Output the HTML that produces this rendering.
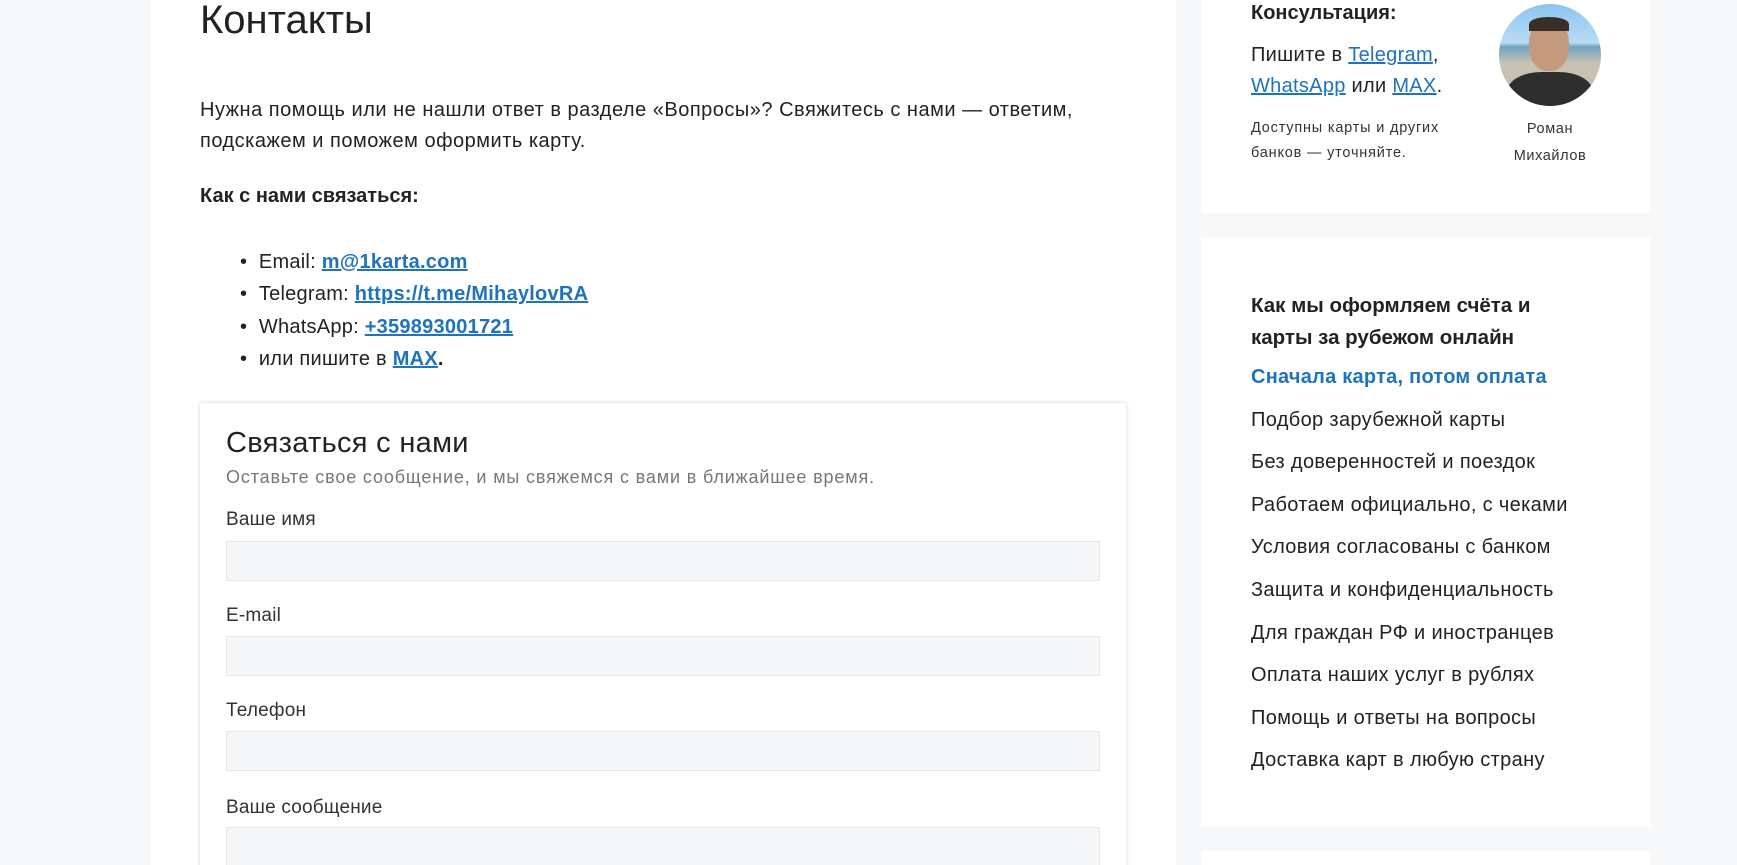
<!DOCTYPE html>
<html style="overflow:hidden;width:1737px;height:865px"><head><meta charset="utf-8"><style>
*{margin:0;padding:0;box-sizing:border-box}
body{width:1737px;height:865px;overflow:hidden;background:#f7f8f9;font-family:"Liberation Sans","DejaVu Sans",sans-serif;color:#222;position:relative}
.main{position:absolute;left:151px;top:0;width:1025px;height:865px;background:#fff}
.a{position:absolute;white-space:nowrap}
a{color:#1e73be;text-decoration:underline}
.card{position:absolute;background:#fff;left:1201px;width:450px}
.inp{position:absolute;left:226px;width:874px;height:40px;background:#f6f7f8;border:1px solid #e6e7e8}
.lab{font-size:19px;color:#333;left:226px;letter-spacing:0.2px}
.nav{left:1251px;font-size:20px;color:#222;letter-spacing:0.35px}
</style></head><body>
<div class="main"></div>
<div class="a" style="left:200px;top:-2px;font-size:40px;color:#222">Контакты</div>
<div class="a" style="left:200px;top:95px;font-size:20px;line-height:31px;color:#222;letter-spacing:0.5px">Нужна помощь или не нашли ответ в разделе «Вопросы»? Свяжитесь с нами — ответим,<br>подскажем и поможем оформить карту.</div>
<div class="a" style="left:200px;top:185px;font-size:20px;font-weight:bold">Как с нами связаться:</div>
<div class="a" style="left:240px;top:246px;font-size:20px;line-height:32.3px;letter-spacing:0.25px">
• &nbsp;Email: <a href="#" style="font-weight:bold">m@1karta.com</a><br>
• &nbsp;Telegram: <a href="#" style="font-weight:bold">https://t.me/MihaylovRA</a><br>
• &nbsp;WhatsApp: <a href="#" style="font-weight:bold">+359893001721</a><br>
• &nbsp;или пишите в <a href="#" style="font-weight:bold">MAX</a><b>.</b></div>
<div style="position:absolute;left:200px;top:403px;width:926px;height:470px;background:#fff;box-shadow:0 0 4px rgba(0,0,0,.18)"></div>
<div class="a" style="left:226px;top:427px;font-size:29px;color:#222;letter-spacing:0.3px">Связаться с нами</div>
<div class="a" style="left:226px;top:467px;font-size:18px;color:#777;letter-spacing:0.85px">Оставьте свое сообщение, и мы свяжемся с вами в ближайшее время.</div>
<div class="a lab" style="top:509px">Ваше имя</div><div class="inp" style="top:541px"></div>
<div class="a lab" style="top:605px">E-mail</div><div class="inp" style="top:636px"></div>
<div class="a lab" style="top:700px">Телефон</div><div class="inp" style="top:731px"></div>
<div class="a lab" style="top:797px">Ваше сообщение</div><div class="inp" style="top:827px;height:38px;border-bottom:none"></div>

<div class="card" style="top:0;height:213px"></div>
<div class="a" style="left:1251px;top:2px;font-size:20px;font-weight:bold">Консультация:</div>
<div class="a" style="left:1251px;top:40px;font-size:20px;line-height:31px;letter-spacing:0.3px">Пишите в <a href="#">Telegram</a>,<br><a href="#">WhatsApp</a> или <a href="#">MAX</a>.</div>
<div class="a" style="left:1251px;top:116px;font-size:14.5px;line-height:25px;color:#333;letter-spacing:0.8px">Доступны карты и других<br>банков — уточняйте.</div>
<div style="position:absolute;left:1499px;top:4px;width:102px;height:102px;border-radius:50%;overflow:hidden;background:linear-gradient(#8cc4ef 0,#b9dcf5 38%,#6fa4c0 42%,#c9c3b4 58%,#c4bba8 100%)">
<div style="position:absolute;left:30px;top:15px;width:40px;height:52px;border-radius:45%;background:#c49a7e"></div>
<div style="position:absolute;left:30px;top:13px;width:40px;height:14px;border-radius:50% 50% 0 0;background:#3a2e28"></div>
<div style="position:absolute;left:8px;top:68px;width:86px;height:50px;border-radius:40% 40% 0 0;background:#2e2e2e"></div></div>
<div class="a" style="left:1470px;top:116px;width:160px;text-align:center;font-size:14.5px;line-height:27px;color:#333;letter-spacing:0.6px">Роман<br>Михайлов</div>

<div class="card" style="top:238px;height:589px"></div>
<div class="a" style="left:1251px;top:290px;font-size:20.5px;font-weight:bold;line-height:32px">Как мы оформляем счёта и<br>карты за рубежом онлайн</div>
<div class="a nav" style="top:366px;color:#1e73be;font-weight:bold;letter-spacing:0.25px">Сначала карта, потом оплата</div>
<div class="a nav" style="top:409px">Подбор зарубежной карты</div>
<div class="a nav" style="top:451px">Без доверенностей и поездок</div>
<div class="a nav" style="top:494px">Работаем официально, с чеками</div>
<div class="a nav" style="top:536px">Условия согласованы с банком</div>
<div class="a nav" style="top:579px">Защита и конфиденциальность</div>
<div class="a nav" style="top:622px">Для граждан РФ и иностранцев</div>
<div class="a nav" style="top:664px">Оплата наших услуг в рублях</div>
<div class="a nav" style="top:707px">Помощь и ответы на вопросы</div>
<div class="a nav" style="top:749px">Доставка карт в любую страну</div>
<div class="card" style="top:851px;height:14px"></div>
</body></html>
